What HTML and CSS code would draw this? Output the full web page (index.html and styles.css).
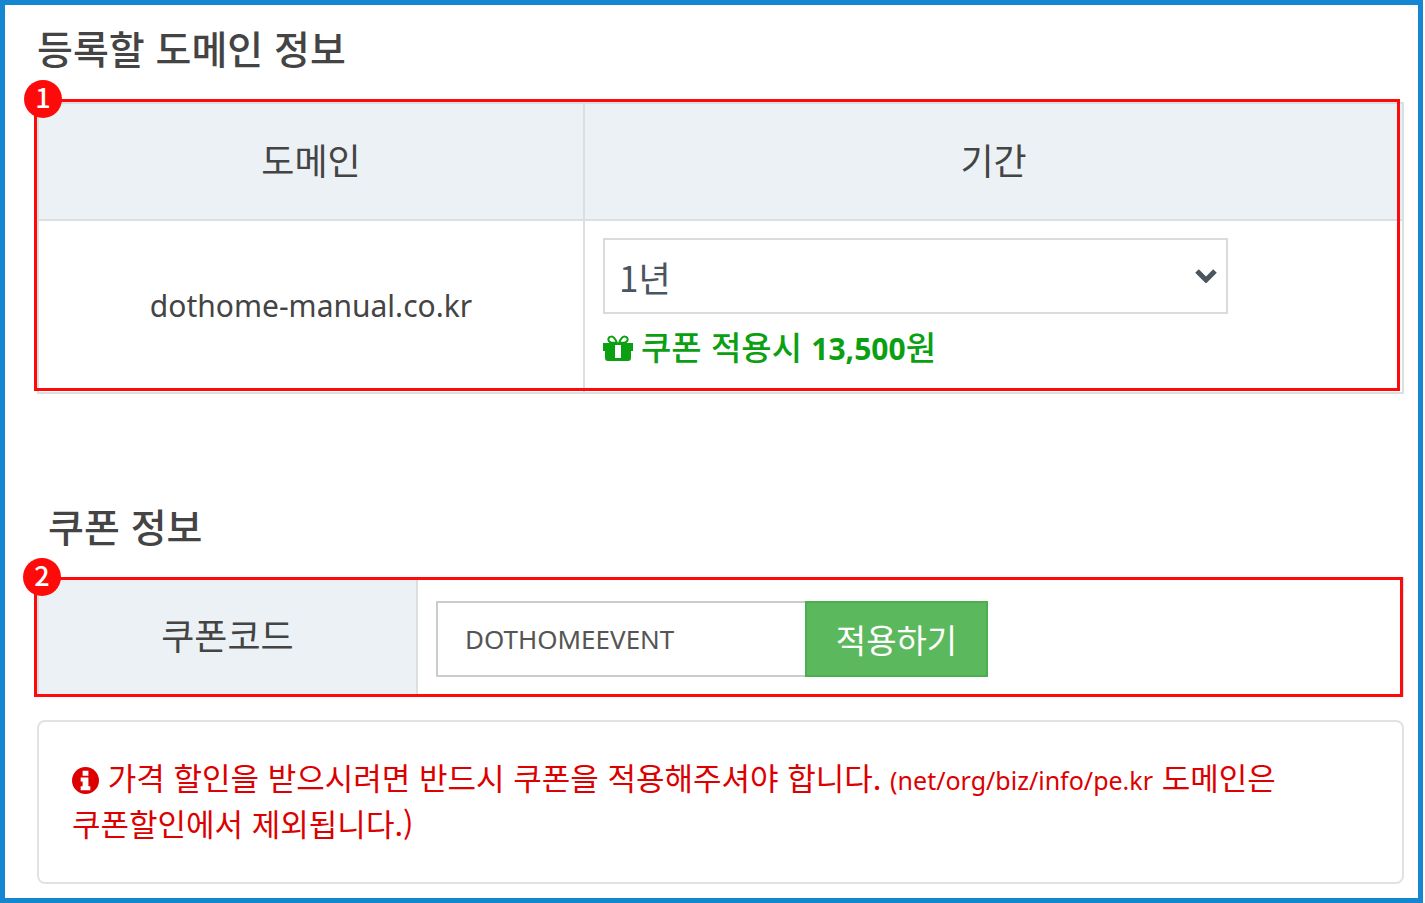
FILE: index.html
```html
<!DOCTYPE html>
<html lang="ko">
<head>
<meta charset="utf-8">
<title>도메인 등록</title>
<link rel="stylesheet" href="styles.css">
</head>
<body>
<main class="page">
  <section class="section">
    <h2 class="title">등록할 도메인 정보</h2>
    <div class="marked marked-domain">
      <table class="grid domain-table">
        <thead>
          <tr><th scope="col">도메인</th><th scope="col"><label for="period">기간</label></th></tr>
        </thead>
        <tbody>
          <tr>
            <td class="domain">dothome-manual.co.kr</td>
            <td class="period">
              <div class="select-wrap">
                <select id="period" class="select"><option>1년</option></select>
                <svg class="chevron" viewBox="0 0 22 14" aria-hidden="true"><path d="M2 2 L11 11 L20 2" fill="none" stroke="#4a555f" stroke-width="5"/></svg>
              </div>
              <p class="discount">
                <svg class="gift" viewBox="0 0 30 26" aria-hidden="true">
                  <path d="M0 8h30v8h-2v7q0 3-3 3H5q-3 0-3-3v-7H0z" fill="#0aa012"/>
                  <path d="M12 10h6v13h-6z" fill="#fff"/>
                  <path d="M14 8C12 3 10 1 8 1.500C5 2 4 6 8 7.500zM16 8C18 3 20 1 22 1.500C25 2 26 6 22 7.500z" fill="none" stroke="#0aa012" stroke-width="2"/>
                </svg>
                <span>쿠폰 적용시 <b>13,500</b>원</span>
              </p>
            </td>
          </tr>
        </tbody>
      </table>
      <span class="badge">1</span>
    </div>
  </section>
  <section class="section coupon">
    <h2 class="title title-coupon">쿠폰 정보</h2>
    <div class="marked marked-coupon">
      <table class="grid coupon-table">
        <tbody>
          <tr>
            <th scope="row"><label for="code">쿠폰코드</label></th>
            <td>
              <form class="coupon-form">
                <input id="code" class="code" type="text" value="DOTHOMEEVENT">
                <button class="apply" type="button">적용하기</button>
              </form>
            </td>
          </tr>
        </tbody>
      </table>
      <span class="badge">2</span>
    </div>
  </section>
  <p class="notice">
    <svg class="info" viewBox="0 0 28 28" aria-hidden="true">
      <circle cx="14" cy="14" r="14" fill="#dc0000"/>
      <path d="M11 4h6v5h-6zM9 11h8v9h2v4H9v-4h2v-5H9z" fill="#fff"/>
    </svg>
    가격 할인을 받으시려면 반드시 쿠폰을 적용해주셔야 합니다. <span class="latin">(net/org/biz/info/pe.kr</span> 도메인은 쿠폰할인에서 제외됩니다.)
  </p>
</main>
</body>
</html>
```
FILE: styles.css
```css
* { box-sizing: border-box; }

body {
  margin: 0;
  background: #fff;
  color: #444;
  font-family: "Noto Sans CJK KR", sans-serif;
}

.page {
  min-height: 100vh;
  margin-right: 2px;
  padding: 18px 14px 14px 32px;
  border: 5px solid #1487d0;
}

.title {
  margin: 0;
  font-size: 39px;
  line-height: 48px;
  font-weight: 500;
}

.title-coupon { padding-left: 11px; }
.coupon { margin-top: 107px; }

/* Tables with a red guide frame laid over them */
.marked { position: relative; }
.marked-domain { margin-top: 31px; }
.marked-coupon { margin-top: 28px; }

.marked::after {
  content: "";
  position: absolute;
  border: 3px solid #ff0a0a;
  pointer-events: none;
}
.marked-domain::after { inset: -3px 4px 3px -3px; }
.marked-coupon::after { inset: 0 1px 0 -3px; }

.badge {
  position: absolute;
  z-index: 1;
  left: -13px;
  top: -22px;
  width: 38px;
  height: 38px;
  border-radius: 50%;
  background: #ff0a0a;
  color: #fff;
  font-size: 27px;
  line-height: 34px;
  font-weight: 500;
  text-align: center;
}
.marked-coupon .badge { left: -14px; top: -19px; }

.grid {
  width: 100%;
  table-layout: fixed;
  border-collapse: collapse;
  font-size: 36px;
}
.grid th,
.grid td {
  padding: 0 18px;
  border: 2px solid #dadfe2;
}
.grid th {
  padding-bottom: 6px;
  background: #ebf1f4;
  font-weight: 400;
}

.domain-table th { height: 117px; }
.domain-table th:first-child { width: 40%; }
.domain-table td { height: 173px; }
.grid .domain {
  padding-bottom: 2px;
  font-family: "Noto Sans", sans-serif;
  font-size: 30px;
  text-align: center;
}
.grid .period { padding-bottom: 4px; }

.select-wrap {
  position: relative;
  width: 80%;
}
.select {
  display: block;
  width: 100%;
  height: 76px;
  padding: 0 14px;
  border: 2px solid #d9dbdd;
  border-radius: 0;
  background: #fff;
  color: #4a555f;
  font: inherit;
  font-size: 35px;
  appearance: none;
}
.chevron {
  position: absolute;
  right: 11px;
  top: 31px;
  width: 22px;
  height: 14px;
  pointer-events: none;
}

.discount {
  display: flex;
  align-items: center;
  gap: 8px;
  margin: 10px 0 0;
  color: #0aa012;
  font-size: 33px;
  line-height: 44px;
  font-weight: 500;
}
.discount b {
  font-family: "Noto Sans", sans-serif;
  font-size: 30px;
}
.gift {
  width: 30px;
  height: 26px;
}

.coupon-table th { width: 379px; }
.coupon-table td { height: 118px; }
.grid .coupon-form { padding-top: 4px; }

.coupon-form { display: flex; }
.code {
  width: 369px;
  height: 76px;
  padding: 0 27px;
  border: 2px solid #ccc;
  border-right-width: 0;
  border-radius: 0;
  background: #fff;
  color: #555;
  font-family: "Noto Sans", sans-serif;
  font-size: 26px;
}
.apply {
  width: 183px;
  height: 76px;
  padding: 0;
  border: 2px solid #4cae4c;
  background: #5cb85c;
  color: #fff;
  font: inherit;
  font-size: 33px;
}

.notice {
  margin: 23px 0 0;
  padding: 32px 33px 36px;
  border: 2px solid #e2e2e2;
  border-radius: 8px;
  color: #dc0000;
  font-size: 31px;
  line-height: 46px;
  word-break: keep-all;
}
.info {
  width: 27px;
  height: 27px;
  vertical-align: -4px;
}
.latin {
  font-family: "Noto Sans", sans-serif;
  font-size: 25px;
  line-height: 1;
}
```
